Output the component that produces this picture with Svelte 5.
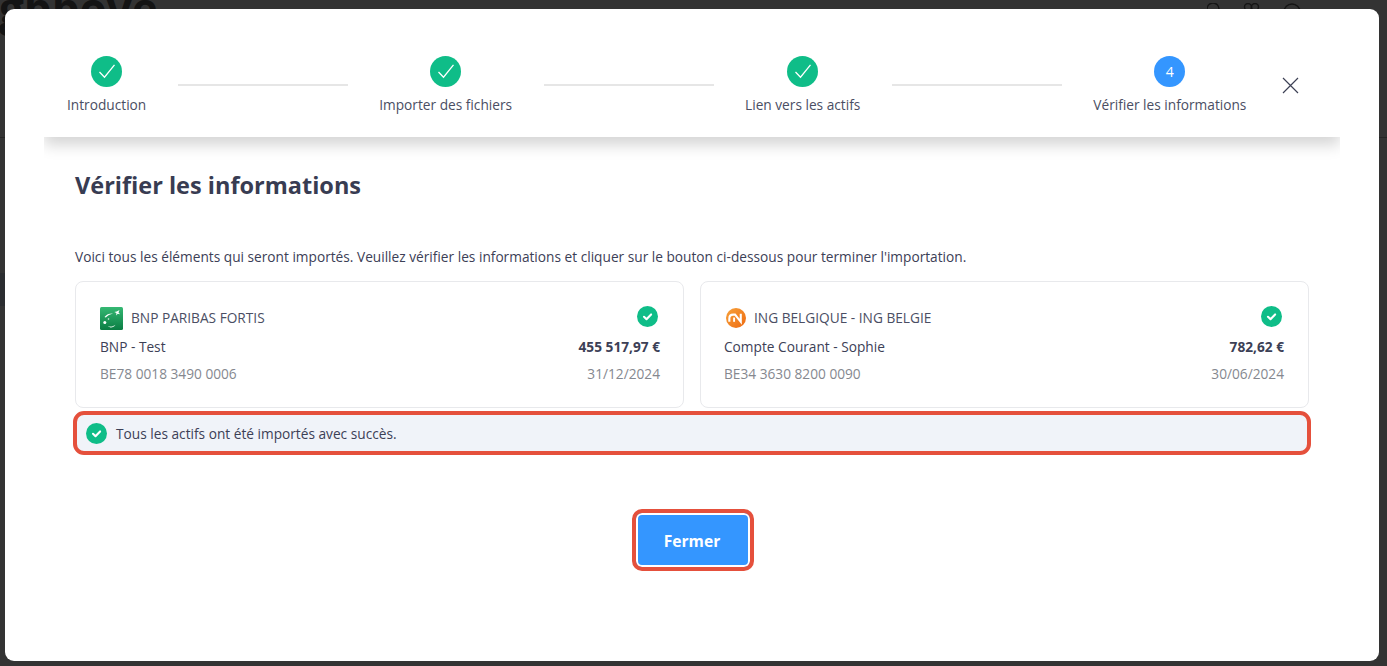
<script lang="ts">
    const steps = [
        { label: "Introduction", done: true },
        { label: "Importer des fichiers", done: true },
        { label: "Lien vers les actifs", done: true },
        { label: "Vérifier les informations", done: false, num: 4 },
    ];

    const accounts = [
        {
            bank: "BNP PARIBAS FORTIS",
            logo: "bnp",
            name: "BNP - Test",
            amount: "455 517,97 €",
            iban: "BE78 0018 3490 0006",
            date: "31/12/2024",
        },
        {
            bank: "ING BELGIQUE - ING BELGIE",
            logo: "ing",
            name: "Compte Courant - Sophie",
            amount: "782,62 €",
            iban: "BE34 3630 8200 0090",
            date: "30/06/2024",
        },
    ];
</script>

{#snippet okIcon()}
    <svg class="ok" viewBox="0 0 21 21" aria-hidden="true">
        <circle cx="10.5" cy="10.5" r="10.5" fill="#0fbd88" />
        <path d="M7 10.8l2.5 2.4 4.6-4.8" fill="none" stroke="#fff" stroke-width="2.1" stroke-linecap="round" stroke-linejoin="round" />
    </svg>
{/snippet}

<div class="page">
    <div class="behind" aria-hidden="true">
        <span class="brand">gbbove</span>
        <svg class="top-icons" viewBox="0 0 100 12" fill="none" stroke="#151515" stroke-width="1.4">
            <circle cx="6" cy="6" r="6" />
            <circle cx="41" cy="4" r="3.5" />
            <circle cx="48" cy="4" r="3.5" />
            <circle cx="85" cy="9" r="8" />
        </svg>
        <span class="side-rule"></span>
        <span class="side-hover"></span>
    </div>

    <div class="modal">
        <header class="stepper">
            {#each steps as step, i}
                {#if i > 0}
                    <span class="line"></span>
                {/if}
                <div class="step">
                    {#if step.done}
                        <svg class="circle" viewBox="0 0 31 31" aria-hidden="true">
                            <circle cx="15.5" cy="15.5" r="15.5" fill="#0fbd88" />
                            <path d="M8.5 16l5 5.2L23.5 8.8" fill="none" stroke="#fff" stroke-width="1.3" />
                        </svg>
                    {:else}
                        <span class="circle current">{step.num}</span>
                    {/if}
                    <span class="step-label">{step.label}</span>
                </div>
            {/each}
            <button class="close" aria-label="Fermer la fenêtre">
                <svg viewBox="0 0 17 17" width="17" height="17" aria-hidden="true">
                    <path d="M1 1l15 15M16 1L1 16" fill="none" stroke="#3d4155" stroke-width="1.2" />
                </svg>
            </button>
        </header>

        <main class="content">
            <h1>Vérifier les informations</h1>
            <p class="intro">
                Voici tous les éléments qui seront importés. Veuillez vérifier les informations et cliquer sur le bouton ci-dessous pour terminer l'importation.
            </p>

            <div class="cards">
                {#each accounts as account}
                    <article class="card">
                        <div class="row top">
                            <div class="bank">
                                {#if account.logo === "bnp"}
                                    <svg class="logo" viewBox="0 0 23 23" aria-hidden="true">
                                        <defs>
                                            <linearGradient id="bnp-green" x1="0" y1="0" x2="0" y2="1">
                                                <stop offset="0" stop-color="#35b873" />
                                                <stop offset="1" stop-color="#0a7d43" />
                                            </linearGradient>
                                        </defs>
                                        <rect width="23" height="23" rx="1.5" fill="url(#bnp-green)" />
                                        <path d="M19.5 3l-1 2.6 1.6 1.6-2.4-.4-1.5 1.6.2-2.4-2.1-.9 2.400-.5z" fill="#fff" />
                                        <path d="M4.500 10c2-2.800 5-3.800 8.500-3.600-3 .8-5.500 2-7.200 4.200z" fill="#fff" />
                                        <circle cx="4.800" cy="15.600" r="1.500" fill="#fff" />
                                        <circle cx="8.500" cy="12" r=".8" fill="#dff3e6" />
                                        <path d="M8 19c2.500 1 5 .6 7.500-1.200-1.800 3-5.400 3.600-7.500 1.200z" fill="#dff3e6" />
                                    </svg>
                                {:else}
                                    <svg class="logo ing" viewBox="0 0 21 21" aria-hidden="true">
                                        <defs>
                                            <linearGradient id="ing-orange" x1="0" y1="0" x2="1" y2="1">
                                                <stop offset="0" stop-color="#f7a23b" />
                                                <stop offset="1" stop-color="#ee6a10" />
                                            </linearGradient>
                                        </defs>
                                        <circle cx="10.500" cy="10.500" r="10.500" fill="url(#ing-orange)" />
                                        <path d="M3.500 14.500V11Q3.500 7 7.500 7H9.500L15.500 14.500V6" fill="none" stroke="#fff" stroke-width="2.200" />
                                        <path d="M8.500 14.500V10" fill="none" stroke="#fff" stroke-width="2" />
                                    </svg>
                                {/if}
                                <span>{account.bank}</span>
                            </div>
                            {@render okIcon()}
                        </div>
                        <div class="row main">
                            <span>{account.name}</span>
                            <strong>{account.amount}</strong>
                        </div>
                        <div class="row muted">
                            <span>{account.iban}</span>
                            <span>{account.date}</span>
                        </div>
                    </article>
                {/each}
            </div>

            <div class="alert">
                {@render okIcon()}
                <span>Tous les actifs ont été importés avec succès.</span>
            </div>

            <div class="actions">
                <button class="primary">Fermer</button>
            </div>
        </main>
    </div>
</div>

<style>
    :global(body) {
        margin: 0;
        background: #333333;
        font-family: "Open Sans", sans-serif;
        overflow: hidden;
    }

    .page {
        position: relative;
        height: 666px;
        box-sizing: border-box;
        padding: 9px 8px 5px 5px;
        overflow: hidden;
    }

    .behind {
        position: absolute;
        inset: 0;
    }

    .brand {
        position: absolute;
        left: -1px;
        top: -22px;
        font-size: 44px;
        line-height: 60px;
        font-weight: 700;
        color: #141414;
    }

    .top-icons {
        position: absolute;
        left: 1207px;
        top: 3px;
        width: 100px;
        height: 12px;
    }

    .side-rule {
        position: absolute;
        left: 0;
        right: 0;
        top: 137px;
        height: 1px;
        background: #252525;
    }

    .side-hover {
        position: absolute;
        left: 0;
        top: 273px;
        width: 5px;
        height: 33px;
        background: #2b2d30;
    }

    .modal {
        position: relative;
        height: 652px;
        box-sizing: border-box;
        padding: 23px 39px 0;
        background: #fff;
        border-radius: 9px;
    }

    .stepper {
        display: flex;
        align-items: flex-start;
        box-sizing: border-box;
        height: 105px;
        padding: 24px 23px 0;
        background: #fff;
        box-shadow: 0 8px 14px rgba(0, 0, 0, 0.17);
        clip-path: inset(0 0 -40px 0);
    }

    .step {
        display: flex;
        flex-direction: column;
        align-items: center;
        gap: 8.5px;
    }

    .circle {
        width: 31px;
        height: 31px;
        display: block;
    }

    .current {
        display: flex;
        align-items: center;
        justify-content: center;
        border-radius: 50%;
        background: #3496ff;
        color: #fff;
        font-size: 14px;
        font-weight: 400;
    }

    .step-label {
        font-size: 13.7px;
        line-height: 18px;
        color: #4a4e63;
        white-space: nowrap;
    }

    .line {
        flex: 0 0 170px;
        height: 2px;
        margin: 28px 31px 0 32px;
        background: #e6e6e6;
    }

    .close {
        margin: 21px 0 0 36px;
        padding: 0;
        border: 0;
        background: none;
        line-height: 0;
    }

    .content {
        padding: 0 31px;
    }

    h1 {
        margin: 31px 0 0;
        font-size: 23.5px;
        line-height: 34px;
        font-weight: 700;
        color: #383c52;
    }

    .intro {
        margin: 46px 0 0;
        font-size: 13.7px;
        line-height: 18px;
        color: #3c4056;
    }

    .cards {
        display: grid;
        grid-template-columns: 1fr 1fr;
        gap: 16px;
        margin-top: 15px;
    }

    .card {
        box-sizing: border-box;
        height: 127px;
        padding: 24px 23px 0 24px;
        border: 1px solid #e8e9ec;
        border-radius: 8px;
    }

    .card:nth-child(2) {
        padding: 24px 24px 0 23px;
    }

    .row {
        display: flex;
        align-items: center;
        justify-content: space-between;
        font-size: 13.7px;
        line-height: 18px;
    }

    .top {
        height: 21px;
        color: #4a4e63;
    }

    .top .ok {
        margin-right: 2px;
    }

    .bank {
        display: flex;
        align-items: center;
        gap: 8px;
        margin-top: 3px;
    }

    .logo {
        width: 23px;
        height: 23px;
    }

    .logo.ing {
        width: 20px;
        height: 20px;
        margin-left: 2px;
    }

    .ok {
        width: 21px;
        height: 21px;
        flex: none;
    }

    .main {
        margin-top: 11px;
        color: #3c4056;
    }

    .main strong {
        font-weight: 700;
    }

    .muted {
        margin-top: 9px;
        color: #85888f;
    }

    .alert {
        display: flex;
        align-items: center;
        gap: 9px;
        box-sizing: border-box;
        height: 44px;
        margin: 3px -2px 0;
        padding: 0 8px 0 9px;
        border: 4px solid #e5503c;
        border-radius: 11px;
        background: #f0f3f9;
        font-size: 13.7px;
        color: #3c4056;
    }

    .alert span {
        padding-top: 1px;
    }

    .actions {
        display: flex;
        justify-content: center;
        margin-top: 54px;
        padding-left: 2px;
    }

    .primary {
        box-sizing: border-box;
        width: 122px;
        height: 62px;
        border: 4px solid #e5503c;
        border-radius: 10px;
        padding: 1px 2px 0 0;
        background: #3496ff;
        box-shadow: inset 0 0 0 2px #fff;
        color: #fff;
        font-family: inherit;
        font-size: 15.6px;
        font-weight: 700;
    }
</style>
